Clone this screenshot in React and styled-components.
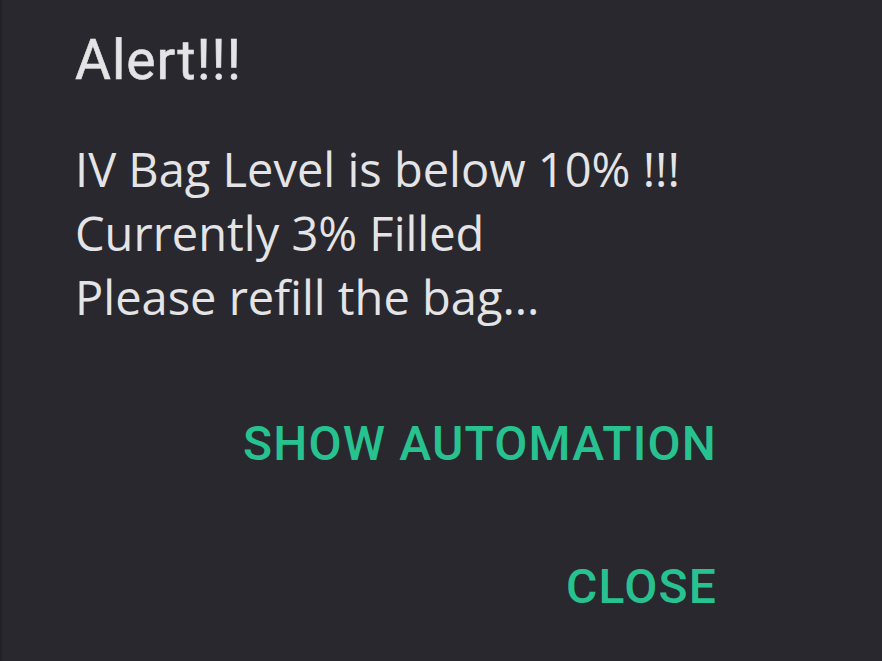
import React from "react";
import styled, { createGlobalStyle } from "styled-components";

const Global = createGlobalStyle`
  html, body { margin: 0; padding: 0; background: #29282e; }
  body { width: 882px; height: 661px; overflow: hidden; }
`;

const Dialog = styled.div`
  box-sizing: border-box;
  width: 882px;
  height: 661px;
  background: #29282e;
  border-left: 2px solid #222126;
  padding: 28px 0 0 73px;
  display: flex;
  flex-direction: column;
`;

const Title = styled.h1`
  margin: 0;
  font-family: Roboto, "Liberation Sans", sans-serif;
  font-weight: 400;
  font-size: 55px;
  letter-spacing: 1px;
  line-height: 64px;
  color: #e4e4e6;
  -webkit-text-stroke: 0.6px #e4e4e6;
`;

const Message = styled.div`
  margin-top: 45px;
  font-family: "Open Sans", "Noto Sans", sans-serif;
  font-weight: 400;
  font-size: 47px;
  line-height: 64px;
  color: #e4e4e6;
`;

const Line = styled.div`
  white-space: nowrap;
`;

const Actions = styled.div`
  display: flex;
  flex-direction: column;
  align-items: flex-end;
  width: 642px;
  margin-top: 83px;
  gap: 79px;
`;

const ActionButton = styled.button`
  background: none;
  border: none;
  padding: 0;
  font-family: Roboto, "Open Sans", sans-serif;
  font-weight: 500;
  font-size: 48px;
  letter-spacing: 1.2px;
  line-height: 64px;
  color: #27c28f;
  text-transform: uppercase;
  white-space: nowrap;
  cursor: pointer;
`;

export default function App() {
  return (
    <>
      <Global />
      <Dialog>
        <Title>Alert!!!</Title>
        <Message>
          <Line>IV Bag Level is below 10% !!!</Line>
          <Line>Currently 3% Filled</Line>
          <Line>Please refill the bag...</Line>
        </Message>
        <Actions>
          <ActionButton>Show Automation</ActionButton>
          <ActionButton>Close</ActionButton>
        </Actions>
      </Dialog>
    </>
  );
}
